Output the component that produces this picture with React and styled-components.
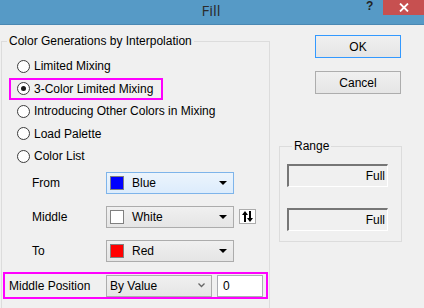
import React from 'react'
import styled, { createGlobalStyle, css } from 'styled-components'

const GlobalStyle = createGlobalStyle`
  html, body {
    margin: 0;
    padding: 0;
    background: #f0f0f0;
  }
  body {
    font-family: 'Liberation Sans', Arial, sans-serif;
    font-size: 12px;
    color: #000;
  }
`

const Window = styled.div`
  width: 424px;
  height: 308px;
  overflow: hidden;
  background: #f0f0f0;
`

const TitleBar = styled.div`
  height: 24px;
  background: #569ac6;
  border-bottom: 1px solid #4a88b3;
  display: flex;
  align-items: flex-start;
`

const Title = styled.div`
  flex: 1;
  text-align: center;
  padding-left: 56px;
  font-family: 'Open Sans', sans-serif;
  font-size: 15px;
  line-height: 20px;
  color: #2b2b2b;
`

const Help = styled.div`
  width: 17px;
  font-family: 'Liberation Sans', sans-serif;
  font-weight: bold;
  font-size: 12px;
  line-height: 12px;
  color: #222;
`

const CloseBtn = styled.div`
  width: 41px;
  height: 15px;
  background: #c75050;
  display: flex;
  align-items: center;
  justify-content: center;
`

const Body = styled.div`
  display: flex;
  align-items: flex-start;
`

const Group = styled.fieldset`
  margin: 9px 0 0 1px;
  padding: 0;
  width: 269px;
  min-height: 300px;
  box-sizing: border-box;
  border: 1px solid #dcdcdc;
  border-radius: 0;
`

const Legend = styled.legend`
  margin-left: 5px;
  padding: 0 2px;
  line-height: 14px;
`

const RadioList = styled.div`
  padding: 7px 0 0 7px;
`

const RadioRow = styled.div`
  display: flex;
  align-items: center;
  width: fit-content;
  height: 22.5px;
  padding: 0 10px 0 8px;
  box-sizing: border-box;
  ${({ $highlight }) =>
    $highlight &&
    css`
      outline: 2px solid #ff00ff;
      outline-offset: -2px;
    `}
`

const RadioDot = styled.span`
  width: 13px;
  height: 13px;
  box-sizing: border-box;
  border-radius: 50%;
  border: 1px solid #3c3c3c;
  background: #fff;
  margin-right: 4px;
  display: flex;
  align-items: center;
  justify-content: center;
  &::after {
    content: '';
    width: 5px;
    height: 5px;
    border-radius: 50%;
    background: ${({ $checked }) => ($checked ? '#1a1a1a' : 'transparent')};
  }
`

const ColorRows = styled.div`
  display: flex;
  flex-direction: column;
  gap: 12px;
  padding: 4px 0 0 30px;
`

const ColorRow = styled.div`
  display: flex;
  align-items: center;
  height: 22px;
`

const RowLabel = styled.div`
  width: 74px;
`

const Combo = styled.div`
  width: 128px;
  height: 22px;
  box-sizing: border-box;
  display: flex;
  align-items: center;
  padding: 0 6px 0 3px;
  border: 1px solid ${({ $focused }) => ($focused ? '#7eb4ea' : '#acacac')};
  background: ${({ $focused }) =>
    $focused
      ? 'linear-gradient(#ecf4fc, #dcecfc)'
      : 'linear-gradient(#f0f0f0, #e5e5e5)'};
`

const Swatch = styled.span`
  width: 14px;
  height: 14px;
  box-sizing: border-box;
  border: 1px solid #808080;
  background: ${({ $color }) => $color};
  margin-right: 8px;
`

const ComboText = styled.span`
  flex: 1;
`

const SwapButton = styled.div`
  width: 17px;
  height: 15px;
  box-sizing: border-box;
  margin-left: 5px;
  border: 1px solid #acacac;
  background: #fff;
  display: flex;
  align-items: center;
  justify-content: center;
`

const PositionRow = styled.div`
  display: flex;
  align-items: center;
  margin: 10px 0 0 1px;
  width: 265px;
  height: 27px;
  box-sizing: border-box;
  border: 2px solid #ff00ff;
  padding: 1px 3px 0 4px;
`

const PositionLabel = styled.div`
  width: 97px;
`

const Select = styled.div`
  width: 106px;
  height: 22px;
  box-sizing: border-box;
  display: flex;
  align-items: center;
  padding: 0 6px 0 3px;
  border: 1px solid #acacac;
  background: linear-gradient(#f0f0f0, #e5e5e5);
`

const Edit = styled.div`
  width: 46px;
  height: 22px;
  box-sizing: border-box;
  margin-left: 5px;
  border: 1px solid #abadb3;
  background: #fff;
  padding: 0 0 0 5px;
  line-height: 20px;
`

const Side = styled.div`
  display: flex;
  flex-direction: column;
  padding-top: 10px;
`

const Button = styled.div`
  width: 86px;
  height: 23px;
  box-sizing: border-box;
  margin: 0 0 13px 45px;
  display: flex;
  align-items: center;
  justify-content: center;
  border: 1px solid ${({ $primary }) => ($primary ? '#3399ff' : '#adadad')};
  background: linear-gradient(#f0f0f0, #e5e5e5);
`

const RangeGroup = styled.fieldset`
  margin: 32px 0 0 9px;
  padding: 11px 0 10px 7px;
  width: 123px;
  box-sizing: border-box;
  border: 1px solid #dcdcdc;
`

const Field = styled.div`
  width: 101px;
  height: 23px;
  box-sizing: border-box;
  border-top: 2px solid #767676;
  border-left: 2px solid #767676;
  border-right: 1px solid #fff;
  border-bottom: 1px solid #fff;
  text-align: right;
  padding-right: 2px;
  line-height: 20px;
  & + & {
    margin-top: 21px;
  }
`

const DropArrow = () => (
  <svg width="8" height="4" viewBox="0 0 8 4">
    <path d="M0 0h8L4 4z" fill="#000" />
  </svg>
)

const Chevron = () => (
  <svg width="7" height="5" viewBox="0 0 7 5">
    <path d="M0.5 0.5l3 3 3-3" fill="none" stroke="#666" strokeWidth="1.3" />
  </svg>
)

const SwapIcon = () => (
  <svg width="11" height="11" viewBox="0 0 11 11">
    <path d="M3 0L6 4H4V11H2V4H0z" fill="#000" />
    <path d="M8 11L5 7H7V0H9V7H11z" fill="#000" />
  </svg>
)

const CloseIcon = () => (
  <svg width="10" height="9" viewBox="0 0 10 9">
    <path d="M1 0.5l8 8M9 0.5l-8 8" stroke="#fff" strokeWidth="1.8" />
  </svg>
)

const options = [
  'Limited Mixing',
  '3-Color Limited Mixing',
  'Introducing Other Colors in Mixing',
  'Load Palette',
  'Color List',
]

const colors = [
  { label: 'From', name: 'Blue', color: '#0000ff', focused: true },
  { label: 'Middle', name: 'White', color: '#ffffff', swap: true },
  { label: 'To', name: 'Red', color: '#ff0000' },
]

const App = () => (
  <Window>
    <GlobalStyle />
    <TitleBar>
      <Title>Fill</Title>
      <Help>?</Help>
      <CloseBtn>
        <CloseIcon />
      </CloseBtn>
    </TitleBar>
    <Body>
      <Group>
        <Legend>Color Generations by Interpolation</Legend>
        <RadioList>
          {options.map((opt, i) => (
            <RadioRow key={opt} $highlight={i === 1}>
              <RadioDot $checked={i === 1} />
              {opt}
            </RadioRow>
          ))}
        </RadioList>
        <ColorRows>
          {colors.map(c => (
            <ColorRow key={c.label}>
              <RowLabel>{c.label}</RowLabel>
              <Combo $focused={c.focused}>
                <Swatch $color={c.color} />
                <ComboText>{c.name}</ComboText>
                <DropArrow />
              </Combo>
              {c.swap && (
                <SwapButton>
                  <SwapIcon />
                </SwapButton>
              )}
            </ColorRow>
          ))}
        </ColorRows>
        <PositionRow>
          <PositionLabel>Middle Position</PositionLabel>
          <Select>
            <ComboText>By Value</ComboText>
            <Chevron />
          </Select>
          <Edit>0</Edit>
        </PositionRow>
      </Group>
      <Side>
        <Button $primary>OK</Button>
        <Button>Cancel</Button>
        <RangeGroup>
          <Legend>Range</Legend>
          <Field>Full</Field>
          <Field>Full</Field>
        </RangeGroup>
      </Side>
    </Body>
  </Window>
)

export default App
